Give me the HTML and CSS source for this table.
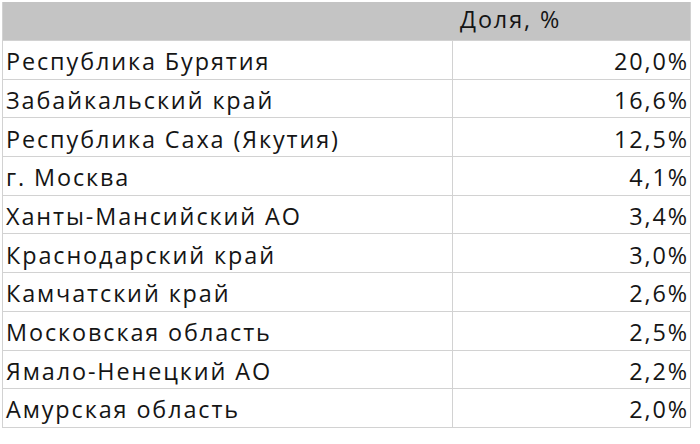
FILE: index.html
```html
<!DOCTYPE html>
<html lang="ru">
<head>
<meta charset="utf-8">
<link rel="stylesheet" href="styles.css">
</head>
<body>
<div class="sheet">
  <div class="head"><span class="head-label">Доля, %</span></div>
  <div class="row"><div class="name">Республика Бурятия</div><div class="val">20,0%</div></div>
  <div class="row"><div class="name">Забайкальский край</div><div class="val">16,6%</div></div>
  <div class="row"><div class="name">Республика Саха (Якутия)</div><div class="val">12,5%</div></div>
  <div class="row"><div class="name">г. Москва</div><div class="val">4,1%</div></div>
  <div class="row"><div class="name">Ханты-Мансийский АО</div><div class="val">3,4%</div></div>
  <div class="row"><div class="name">Краснодарский край</div><div class="val">3,0%</div></div>
  <div class="row"><div class="name">Камчатский край</div><div class="val">2,6%</div></div>
  <div class="row"><div class="name">Московская область</div><div class="val">2,5%</div></div>
  <div class="row"><div class="name">Ямало-Ненецкий АО</div><div class="val">2,2%</div></div>
  <div class="row"><div class="name">Амурская область</div><div class="val">2,0%</div></div>
</div>
</body>
</html>
```
FILE: styles.css
```css
html, body {
  margin: 0;
  padding: 0;
  background: #ffffff;
}
body {
  font-family: "Open Sans", "Noto Sans", sans-serif;
  font-size: 23.4px;
  letter-spacing: 1.9px;
  color: #151515;
}
.sheet {
  margin: 2px 0 0 2px;
  width: 689px;
  border-left: 1px solid #d2d2d2;
  border-right: 1px solid #d2d2d2;
  border-bottom: 1px solid #d2d2d2;
  box-sizing: border-box;
}
.head {
  height: 38px;
  background: #c4c4c4;
  display: flex;
  align-items: flex-end;
  padding: 0 0 9px 457px;
  box-sizing: border-box;
  line-height: 1;
}
.row {
  display: grid;
  grid-template-columns: 450px 1fr;
  height: 38.7px;
  box-sizing: border-box;
  border-top: 1px solid #d2d2d2;
}
.name, .val {
  display: flex;
  align-items: flex-end;
  padding-bottom: 5px;
  line-height: 1;
  white-space: nowrap;
}
.name {
  padding-left: 3px;
  border-right: 1px solid #d2d2d2;
}
.val {
  justify-content: flex-end;
  padding-right: 1px;
}
```
